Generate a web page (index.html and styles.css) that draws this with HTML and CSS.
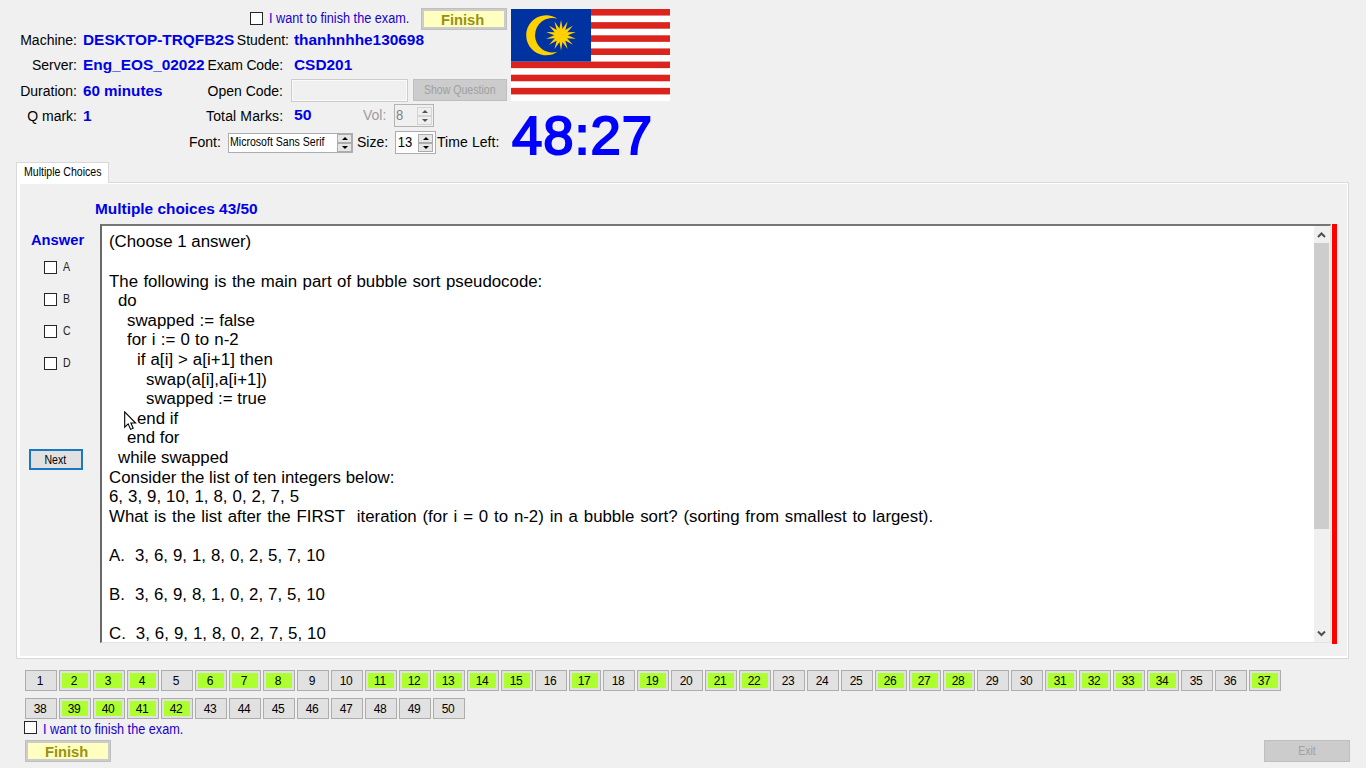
FILE: index.html
```
<!DOCTYPE html>
<html lang="en">
<head>
<meta charset="utf-8">
<title>Exam</title>
<link rel="stylesheet" href="styles.css">
</head>
<body>
<div class="window">
  <header class="header">
    <div class="info">
      <div class="row row-finish">
        <span class="checkbox"></span><span class="confirm">I want to finish the exam.</span>
        <div class="btn-finish top"><span class="bold">Finish</span></div>
      </div>
      <div class="row fields student-row">
        <span class="label">Machine:</span><span class="value">DESKTOP-TRQFB2S</span>
        <span class="label">Student:</span><span class="value">thanhnhhe130698</span>
      </div>
      <div class="row fields">
        <span class="label">Server:</span><span class="value server">Eng_EOS_02022</span>
        <span class="label exam">Exam Code:</span><span class="value far">CSD201</span>
      </div>
      <div class="row fields">
        <span class="label">Duration:</span><span class="value minutes">60 minutes</span>
        <span class="label">Open Code:</span>
        <div class="controls"><span class="open-input"></span><div class="btn-disabled show"><span class="small">Show Question</span></div></div>
      </div>
      <div class="row fields">
        <span class="label">Q mark:</span><span class="value">1</span>
        <span class="label total">Total Marks:</span>
        <div class="controls marks"><span class="value far">50</span><span class="label muted">Vol:</span>
          <div class="spin spin-vol"><span class="num">8</span><span class="arrows off"><i class="up"></i><i class="down"></i></span></div></div>
      </div>
      <div class="row row-font">
        <span class="label font-label">Font:</span>
        <div class="spin spin-font"><span class="small">Microsoft Sans Serif</span><span class="arrows"><i class="up"></i><i class="down"></i></span></div>
        <span class="label size-label">Size:</span>
        <div class="spin spin-size"><span class="num">13</span><span class="arrows"><i class="up"></i><i class="down"></i></span></div>
        <span class="label time-label">Time Left:</span>
      </div>
    </div>
    <div class="side">
      <svg class="flag" width="159" height="92" viewBox="0 0 159 92">
        <rect width="159" height="92" fill="#fff"/>
        <g fill="#dc241f">
          <rect width="159" height="6.57"/><rect y="13.14" width="159" height="6.57"/><rect y="26.29" width="159" height="6.57"/><rect y="39.43" width="159" height="6.57"/><rect y="52.57" width="159" height="6.57"/><rect y="65.71" width="159" height="6.57"/><rect y="78.86" width="159" height="6.57"/>
        </g>
        <rect width="80" height="52.6" fill="#0032a0"/>
        <path fill="#ffd100" d="M46.5 9.8A20 20 0 1 0 46.5 42.8A17.3 17.3 0 1 1 46.5 9.8Z"/>
        <g fill="#ffd100" transform="translate(50 26.3)">
          <circle r="6.4"/>
          <path id="ray" d="M0-15.2L1.7-6V6L0 15.2L-1.7 6V-6Z"/>
          <use href="#ray" transform="rotate(25.714)"/><use href="#ray" transform="rotate(51.429)"/><use href="#ray" transform="rotate(77.143)"/><use href="#ray" transform="rotate(102.857)"/><use href="#ray" transform="rotate(128.571)"/><use href="#ray" transform="rotate(154.286)"/>
        </g>
      </svg>
      <div class="clock">48:27</div>
    </div>
  </header>

  <div class="tab"><span class="small">Multiple Choices</span></div>
  <main class="panel">
    <div class="panel-title bold">Multiple choices 43/50</div>
    <div class="work">
      <aside class="answers">
        <div class="bold answer-title">Answer</div>
        <div class="option"><span class="checkbox"></span><span class="small">A</span></div>
        <div class="option"><span class="checkbox"></span><span class="small">B</span></div>
        <div class="option"><span class="checkbox"></span><span class="small">C</span></div>
        <div class="option"><span class="checkbox"></span><span class="small">D</span></div>
        <div class="next"><span class="small">Next</span></div>
      </aside>
      <section class="editor">
        <div class="text">
          <p>(Choose 1 answer)</p>
          <p></p>
          <p class="prose">The following is the main part of bubble sort pseudocode:</p>
          <p class="in1">do</p>
          <p class="in2 loose">swapped := false</p>
          <p class="in2 loose">for i := 0 to n-2</p>
          <p class="in3 wide">if a[i] &gt; a[i+1] then</p>
          <p class="in4 wide">swap(a[i],a[i+1])</p>
          <p class="in4">swapped := true</p>
          <p class="in3">end if</p>
          <p class="in2">end for</p>
          <p class="in1">while swapped</p>
          <p>Consider the list of ten integers below:</p>
          <p class="list">6, 3, 9, 10, 1, 8, 0, 2, 7, 5</p>
          <p class="question">What is the list after the FIRST&nbsp; iteration (for i = 0 to n-2) in a bubble sort? (sorting from smallest to largest).</p>
          <p></p>
          <p class="list">A.&nbsp; 3, 6, 9, 1, 8, 0, 2, 5, 7, 10</p>
          <p></p>
          <p class="list">B.&nbsp; 3, 6, 9, 8, 1, 0, 2, 7, 5, 10</p>
          <p></p>
          <p class="list">C.&nbsp; 3, 6, 9, 1, 8, 0, 2, 7, 5, 10</p>
        </div>
        <div class="scrollbar">
          <svg width="15" height="17" viewBox="0 0 15 17"><path d="M4 11L7.5 7.5L11 11" fill="none" stroke="#505050" stroke-width="2"/></svg>
          <div class="thumb"></div>
          <svg width="15" height="17" viewBox="0 0 15 17"><path d="M4 6.5L7.5 10L11 6.5" fill="none" stroke="#505050" stroke-width="2"/></svg>
        </div>
      </section>
      <div class="redbar"></div>
    </div>
    <svg class="cursor" width="13" height="20" viewBox="0 0 13 20"><path d="M.7 .9V16.2L4.2 12.9L6.6 18.4L9.2 17.3L6.9 12H11.6Z" fill="#fff" stroke="#000" stroke-width="1.1"/></svg>
  </main>

  <nav class="numbers">
    <b>1</b><b class="done">2</b><b class="done">3</b><b class="done">4</b><b>5</b><b class="done">6</b><b class="done">7</b><b class="done">8</b><b>9</b><b>10</b><b class="done">11</b><b class="done">12</b><b class="done">13</b><b class="done">14</b><b class="done">15</b><b>16</b><b class="done">17</b><b>18</b><b class="done">19</b><b>20</b><b class="done">21</b><b class="done">22</b><b>23</b><b>24</b><b>25</b><b class="done">26</b><b class="done">27</b><b class="done">28</b><b>29</b><b>30</b><b class="done">31</b><b class="done">32</b><b class="done">33</b><b class="done">34</b><b>35</b><b>36</b><b class="done">37</b><b>38</b><b class="done">39</b><b class="done">40</b><b class="done">41</b><b class="done">42</b><b>43</b><b>44</b><b>45</b><b>46</b><b>47</b><b>48</b><b>49</b><b>50</b>
  </nav>
  <div class="confirm-row"><span class="checkbox"></span><span class="confirm">I want to finish the exam.</span></div>
  <footer class="footer">
    <div class="btn-finish"><span class="bold">Finish</span></div>
    <div class="btn-disabled exit"><span class="small">Exit</span></div>
  </footer>
</div>
</body>
</html>
```
FILE: styles.css
```
*{box-sizing:border-box}
body{margin:0;background:#f0f0f0;color:#000;font:14px/20px "Liberation Sans",Arial,sans-serif;overflow:hidden}
.window{width:1366px;height:768px;overflow:hidden;display:flex;flex-direction:column}
span{white-space:nowrap}
.header{display:flex;height:162px;flex:none;padding-top:8px}
.info{width:511px;flex:none}
.row{display:flex;height:25px;align-items:center}
.row-finish{height:20px;align-items:flex-start}
.row-finish .checkbox{margin:4px 6px 0 250px}
.checkbox{width:13px;height:13px;background:#fff;border:1px solid #262626;flex:none;display:block}
.confirm{display:block;width:140px;color:#1a00cd;transform:scaleX(.906);transform-origin:0 50%}
.btn-finish{width:86px;height:22px;background:#ffffc0;border:1px solid #bfbfbf;box-shadow:inset 0 0 0 2px #ccc;text-align:center;line-height:22px;padding-right:3px}
.btn-finish .bold{display:inline-block;transform:scaleX(1.05);transform-origin:50% 50%;color:#979210}
.btn-finish.top{margin-left:12px}
.fields{display:grid;grid-template-columns:77px 129px 77px 228px;padding-bottom:1px}
.student-row{grid-template-columns:77px 155px 57px 222px}
.fields>.label{text-align:right}
.fields>.value{padding-left:6px;transform-origin:6px 50%}
.student-row>.value:last-child{padding-left:5px}
.label{display:block}
.exam{letter-spacing:-.15px}
.total{letter-spacing:.15px}
.muted{color:#9c9c9c}
.value,.bold{font-weight:700;color:#0000e6}
.value{display:block;transform:scaleX(1.1)}
.fields>.minutes{transform:scaleX(1.085)}
.fields>.far{padding-left:11px;transform-origin:11px 50%}
.controls{display:flex;padding-left:8px;height:25px;align-items:flex-start;padding-top:1px}
.open-input{width:117px;height:23px;border:1px solid #ccc;box-shadow:inset 0 0 0 1px #fafafa}
.btn-disabled{background:#ccc;border:1px solid #bfbfbf;color:#a0a0a0;height:22px;display:flex;justify-content:center;align-items:center}
.show{width:94px;margin-left:5px}
.small{font-size:12px;display:block;transform:scaleX(.88)}
.marks .far{width:72px;padding-left:3px;transform:scaleX(1.13);transform-origin:3px 50%;line-height:23px}
.marks .muted{width:31px;line-height:23px}
.spin{background:#fff;border:1px solid #abadb3;display:flex;justify-content:space-between;align-items:center}
.spin .small{transform-origin:0 50%;margin-left:1px;width:94px;position:relative;top:-1px}
.num{transform:scaleX(.93);transform-origin:0 50%;padding-left:2px;line-height:16px;padding-bottom:2px}
.spin-vol{width:40px;height:23px;background:#f0f0f0;color:#808080;border-color:#b4b4b4;padding-right:1px}
.spin-vol .num{padding-left:1px}
.spin-font{width:125px;height:20px}
.spin-size{width:41px;height:23px;padding-right:2px}
.spin-size .num{padding-left:2px}
.arrows{display:grid;grid-template-rows:1fr 1fr;gap:0;width:15px;height:18px;flex:none}
.arrows i{background:#e6e6e6;border:1px solid #acacac;display:flex;align-items:center;justify-content:center}
.arrows i::before{content:"";border:3px solid transparent;border-top-width:0;border-bottom:3px solid #000}
.arrows .down::before{transform:rotate(180deg)}
.arrows.off i{border-color:#d5d5d5;background:#efefef}
.arrows.off i::before{border-bottom-color:#555}
.row-font{height:29px}
.row-font .label{position:relative;top:-1px}
.font-label{margin-left:189px;width:39px}
.size-label{margin-left:4px;width:38px}
.time-label{margin-left:1px;letter-spacing:.08px}
.side{display:flex;flex-direction:column}
.flag{display:block;margin-top:1px;flex:none}
.clock{font-size:54.5px;line-height:70px;color:#00f;-webkit-text-stroke:2px #00f;letter-spacing:.9px;height:61px;padding-left:1px}

.tab{width:93px;height:21px;flex:none;margin-left:16px;border:1px solid #d9d9d9;border-bottom:0;background:#fff;padding-left:7px;z-index:1}
.tab .small{transform-origin:0 50%;line-height:19px}
.panel{position:relative;margin:-1px 0 0 16px;width:1333px;height:477px;flex:none;border:1px solid #d9d9d9;background:#f0f0f0;box-shadow:inset 3px 0 #fff,inset -1px 0 #fff,inset 0 1px #fff,inset 0 -2px #fff;padding:16px 0 0 12px}
.panel-title{height:25px;padding-left:66px;line-height:20px;transform:scaleX(1.1);transform-origin:66px 50%;white-space:nowrap}
.work{display:flex;height:420px}
.answers{width:71px;flex:none;padding-top:6px}
.answer-title{transform:scaleX(1.05);transform-origin:0 50%;margin-left:2px;height:20px}
.option{display:flex;align-items:center;height:32px;padding:2px 0 0 15px;gap:6px}
.option .small{color:#222;transform-origin:0 50%}
.next{width:54px;height:21px;border:2px solid #1a78c2;background:#e1e1e1;display:flex;align-items:center;justify-content:center;margin-top:71px}
.next .small{position:relative;left:-1px}
.editor{width:1231px;height:419px;border:2px solid #696969;border-top-color:#767676;border-right:1px solid #e3e3e3;border-bottom:1px solid #e3e3e3;background:#fff;display:flex;justify-content:space-between;overflow:hidden}
.text{padding:6.4px 0 0 7px;font-size:16px;line-height:19.6px;width:1180px;height:416px;overflow:hidden}
.text p{margin:0;height:19.6px;white-space:nowrap;transform:scaleX(1.052);transform-origin:0 50%}
.text .in1{margin-left:9px}
.text .in2{margin-left:18px}
.text .in3{margin-left:27.5px}
.text .in4{margin-left:36.5px}
.loose{word-spacing:.5px}
.wide{letter-spacing:.1px}
.prose{word-spacing:.7px}
.question{word-spacing:1.1px}
.list{word-spacing:.3px}
.scrollbar{width:16px;background:#f0f0f0;display:flex;flex-direction:column;height:416px}
.scrollbar svg{display:block;flex:none}
.thumb{height:286px;background:#cdcdcd;margin-bottom:auto;width:15px}
.redbar{width:5px;background:#f00;margin-left:1px}
.cursor{position:absolute;left:107px;top:228px}

.numbers{display:grid;grid-template-columns:repeat(37,32px);gap:7px 2px;padding:11px 0 0 25px;flex:none}
.numbers b{height:21px;border:1px solid #adadad;background:#e1e1e1;font-weight:400;font-size:12px;line-height:20px;text-align:center;padding-right:2px;letter-spacing:-.3px}
.numbers .done{background:#adff2f;box-shadow:inset 0 0 0 2px #e1e1e1}
.confirm-row{display:flex;margin:1px 0 0 24px;gap:6px;height:20px;align-items:flex-start;flex:none}
.confirm-row .checkbox{margin-top:1px}
.confirm-row .confirm{line-height:19px}
.footer{display:flex;justify-content:space-between;padding:0 16px 0 25px;flex:none}
.footer .btn-finish{padding-right:2px}
.exit{width:86px}
```
